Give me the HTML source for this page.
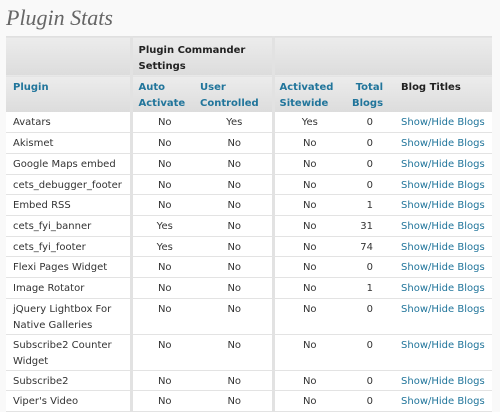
<!DOCTYPE html>
<html><head><meta charset="utf-8"><style>
body{margin:0;background:#f9f9f9;width:500px;height:407px;overflow:hidden;font-family:"DejaVu Sans",Verdana,sans-serif;font-size:10px;color:#333}
h2{position:absolute;left:6px;top:5px;margin:0;font:italic 22px "Liberation Serif",Georgia,serif;color:#666;font-weight:normal}
table{position:absolute;left:6px;top:36px;border-collapse:collapse;border-spacing:0;background:#fff;width:486px;table-layout:fixed}
td,th{padding:0;vertical-align:top;line-height:16px}
thead th{background:linear-gradient(#ececec,#dcdcdc);text-align:left;font-weight:bold;}
.h1 th{height:38px;padding-top:6px;box-sizing:border-box;color:#222;border-top:1px solid #e0e0e0}
.h2 th{height:36px;padding-top:4px;box-sizing:border-box;color:#21759b;border-top:1px solid #e8e8e8}
tbody td{border-bottom:1px solid #e3e3e3;padding-top:3px;box-sizing:border-box;height:20.7px}
tbody tr.d td{height:36px}
.sep{border-right:3px solid #e2e2e2}
.c{text-align:center}.r{text-align:right;padding-right:12px}
a{color:#21759b;text-decoration:none}
</style></head><body>
<h2>Plugin Stats</h2>
<table>
<colgroup><col style="width:125px"><col style="width:66px"><col style="width:76px"><col style="width:72px"><col style="width:40px"><col style="width:107px"></colgroup>
<thead>
<tr class="h1"><th class="sep"></th><th colspan="2" class="sep" style="padding-left:6px">Plugin Commander<br>Settings</th><th colspan="3"></th></tr>
<tr class="h2"><th class="sep" style="padding-left:7px">Plugin</th><th style="padding-left:6px">Auto<br>Activate</th><th class="sep" style="padding-left:3px">User<br>Controlled</th><th style="padding-left:5px">Activated<br>Sitewide</th><th style="text-align:right;padding-right:2px">Total<br>Blogs</th><th style="padding-left:16px;color:#222">Blog Titles</th></tr>
</thead>
<tbody>
<tr><td class="sep" style="padding-left:7px">Avatars</td><td class="c">No</td><td class="c sep">Yes</td><td class="c">Yes</td><td class="r">0</td><td style="padding-left:16px"><a>Show/Hide Blogs</a></td></tr>
<tr><td class="sep" style="padding-left:7px">Akismet</td><td class="c">No</td><td class="c sep">No</td><td class="c">No</td><td class="r">0</td><td style="padding-left:16px"><a>Show/Hide Blogs</a></td></tr>
<tr><td class="sep" style="padding-left:7px">Google Maps embed</td><td class="c">No</td><td class="c sep">No</td><td class="c">No</td><td class="r">0</td><td style="padding-left:16px"><a>Show/Hide Blogs</a></td></tr>
<tr><td class="sep" style="padding-left:7px">cets_debugger_footer</td><td class="c">No</td><td class="c sep">No</td><td class="c">No</td><td class="r">0</td><td style="padding-left:16px"><a>Show/Hide Blogs</a></td></tr>
<tr><td class="sep" style="padding-left:7px">Embed RSS</td><td class="c">No</td><td class="c sep">No</td><td class="c">No</td><td class="r">1</td><td style="padding-left:16px"><a>Show/Hide Blogs</a></td></tr>
<tr><td class="sep" style="padding-left:7px">cets_fyi_banner</td><td class="c">Yes</td><td class="c sep">No</td><td class="c">No</td><td class="r">31</td><td style="padding-left:16px"><a>Show/Hide Blogs</a></td></tr>
<tr><td class="sep" style="padding-left:7px">cets_fyi_footer</td><td class="c">Yes</td><td class="c sep">No</td><td class="c">No</td><td class="r">74</td><td style="padding-left:16px"><a>Show/Hide Blogs</a></td></tr>
<tr><td class="sep" style="padding-left:7px">Flexi Pages Widget</td><td class="c">No</td><td class="c sep">No</td><td class="c">No</td><td class="r">0</td><td style="padding-left:16px"><a>Show/Hide Blogs</a></td></tr>
<tr><td class="sep" style="padding-left:7px">Image Rotator</td><td class="c">No</td><td class="c sep">No</td><td class="c">No</td><td class="r">1</td><td style="padding-left:16px"><a>Show/Hide Blogs</a></td></tr>
<tr class="d"><td class="sep" style="padding-left:7px">jQuery Lightbox For<br>Native Galleries</td><td class="c">No</td><td class="c sep">No</td><td class="c">No</td><td class="r">0</td><td style="padding-left:16px"><a>Show/Hide Blogs</a></td></tr>
<tr class="d"><td class="sep" style="padding-left:7px">Subscribe2 Counter<br>Widget</td><td class="c">No</td><td class="c sep">No</td><td class="c">No</td><td class="r">0</td><td style="padding-left:16px"><a>Show/Hide Blogs</a></td></tr>
<tr><td class="sep" style="padding-left:7px">Subscribe2</td><td class="c">No</td><td class="c sep">No</td><td class="c">No</td><td class="r">0</td><td style="padding-left:16px"><a>Show/Hide Blogs</a></td></tr>
<tr><td class="sep" style="padding-left:7px">Viper's Video</td><td class="c">No</td><td class="c sep">No</td><td class="c">No</td><td class="r">0</td><td style="padding-left:16px"><a>Show/Hide Blogs</a></td></tr>
</tbody>
</table>
</body></html>
